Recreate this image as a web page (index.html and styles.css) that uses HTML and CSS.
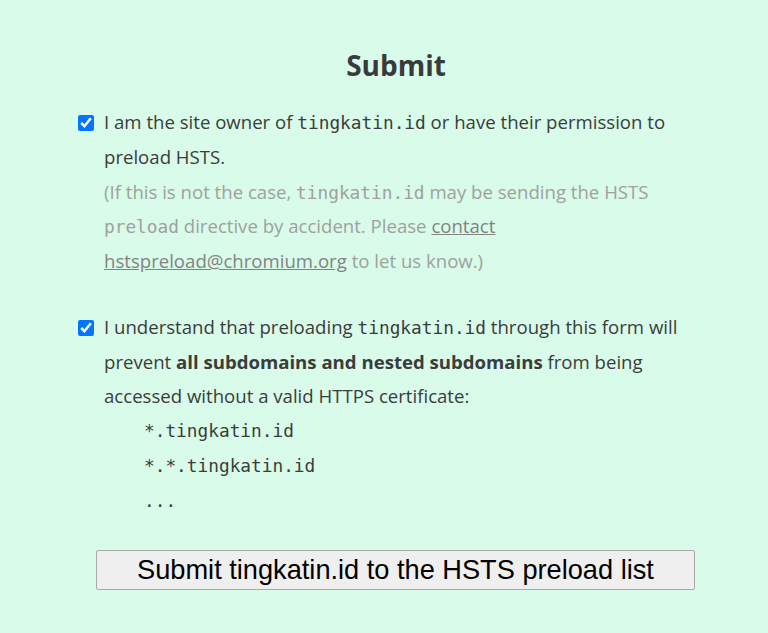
FILE: index.html
```html
<!DOCTYPE html>
<html>
<head>
<meta charset="utf-8">
<link rel="stylesheet" href="styles.css">
</head>
<body>
<div class="wrap">
  <h2 class="title">Submit</h2>
  <div class="item">
    <input type="checkbox" class="cb" checked>
    <div class="text">
      I am the site owner of <code>tingkatin.id</code> or have their permission to preload HSTS.
      <div class="note">(If this is not the case, <code>tingkatin.id</code> may be sending the HSTS <code>preload</code> directive by accident. Please <a href="#">contact hstspreload@chromium.org</a> to let us know.)</div>
    </div>
  </div>
  <div class="item second">
    <input type="checkbox" class="cb" checked>
    <div class="text">
      I understand that preloading <code>tingkatin.id</code> through this form will prevent <b>all subdomains and nested subdomains</b> from being accessed without a valid HTTPS certificate:
      <div class="list">
        <code>*.tingkatin.id</code>
        <code>*.*.tingkatin.id</code>
        <code>...</code>
      </div>
    </div>
  </div>
  <button class="submit">Submit tingkatin.id to the HSTS preload list</button>
</div>
</body>
</html>
```
FILE: styles.css
```css
html, body {
  margin: 0;
  padding: 0;
  background: #d9fbe9;
}
body {
  font-family: "Open Sans", "Noto Sans", sans-serif;
  font-size: 18.6px;
  color: #3c3c3c;
  line-height: 34.75px;
}
.wrap {
  width: 640px;
  margin-left: 76px;
  padding-top: 45px;
}
.title {
  margin: 0 0 20px;
  text-align: center;
  font-size: 28px;
  line-height: 40px;
  font-weight: 700;
  color: #3a3a3a;
}
.item {
  display: flex;
  align-items: flex-start;
}
.second {
  margin-top: 31px;
}
.cb {
  width: 16px;
  height: 16px;
  margin: 10px 10px 0 2px;
  accent-color: #0075ff;
  flex: none;
}
.text {
  flex: 1;
  padding-right: 21px;
}
code {
  font-family: "DejaVu Sans Mono", monospace;
  font-size: 17.8px;
  line-height: 1;
}
.list code {
  line-height: 34.75px;
}
.note {
  color: #a0a0a0;
}
.note a {
  color: #838383;
}
.list {
  display: flex;
  flex-direction: column;
  padding-left: 40px;
}
.submit {
  display: block;
  margin: 32px 0 0 20px;
  width: 599px;
  height: 40px;
  font-family: "Liberation Sans", Arial, sans-serif;
  font-size: 27.2px;
  color: #000;
  background: #efefef;
  border: 1px solid #a9a9a9;
  border-radius: 2px;
  padding: 0;
}
```
